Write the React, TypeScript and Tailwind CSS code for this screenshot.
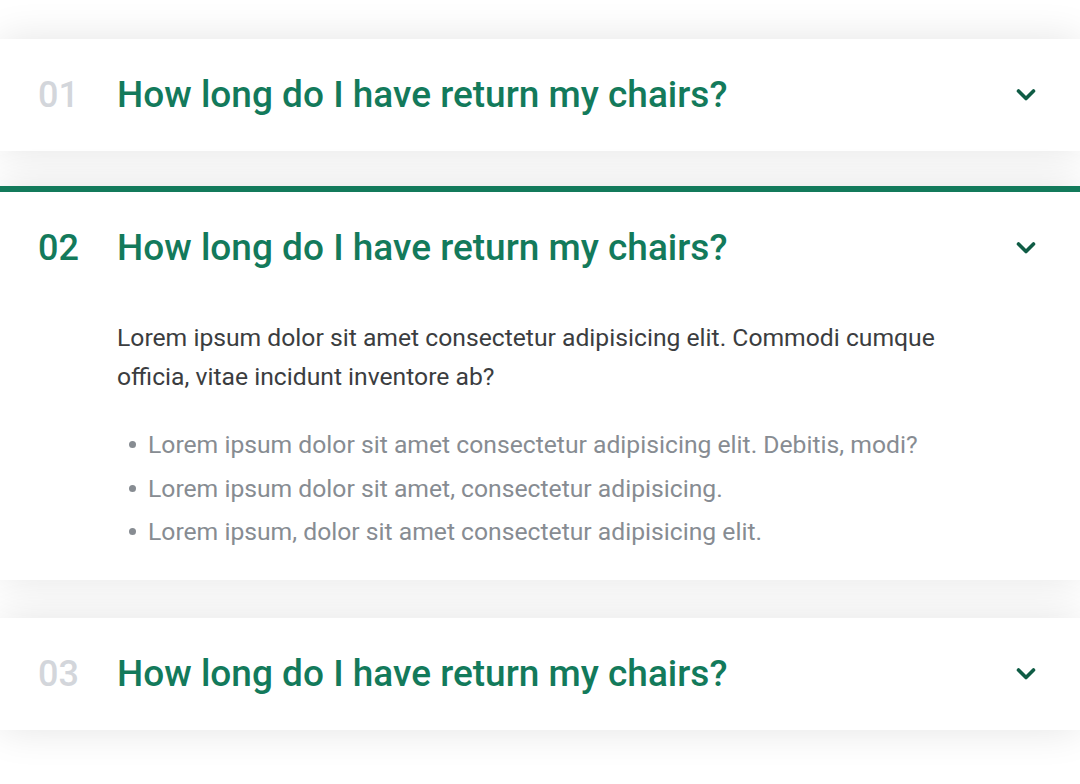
const faqs = [
  { num: '01', open: false },
  { num: '02', open: true },
  { num: '03', open: false },
];

const bullets = [
  'Lorem ipsum dolor sit amet consectetur adipisicing elit. Debitis, modi?',
  'Lorem ipsum dolor sit amet, consectetur adipisicing.',
  'Lorem ipsum, dolor sit amet consectetur adipisicing elit.',
];

function Chevron() {
  return (
    <svg width="20" height="14" viewBox="0 0 20 14" fill="none" className="shrink-0">
      <polyline
        points="2.5,3 10,10.5 17.5,3"
        stroke="#0f5c45"
        strokeWidth="3.6"
        strokeLinecap="round"
        strokeLinejoin="round"
      />
    </svg>
  );
}

function FaqItem({ num, open, last }: { num: string; open: boolean; last?: boolean }) {
  return (
    <div
      className={`bg-white shadow-[0_0_40px_rgba(0,0,0,0.11)] ${
        open ? 'border-t-[6px] border-[#137a5b] pb-[26px]' : ''
      } ${last ? 'mt-[3px]' : ''}`}
    >
      <div className="flex items-center pl-[38px] pr-[44px] py-[34px]">
        <span
          className={`w-[79px] shrink-0 text-[36px] leading-[44px] font-medium ${
            open ? 'text-[#137a5b]' : 'text-[#d3d6db]'
          }`}
        >
          {num}
        </span>
        <h3 className="flex-1 text-[37px] leading-[44px] font-medium text-[#137a5b]">
          How long do I have return my chairs?
        </h3>
        <Chevron />
      </div>
      {open && (
        <div className="pl-[117px] pr-[120px] mt-[14px]">
          <p className="text-[24.7px] leading-[39px] text-[#3b3d40]">
            Lorem ipsum dolor sit amet consectetur adipisicing elit. Commodi cumque officia, vitae incidunt
            inventore ab?
          </p>
          <ul className="mt-[27px]">
            {bullets.map((b) => (
              <li key={b} className="flex items-center text-[24.7px] leading-[43.5px] text-[#878c92]">
                <span className="w-[7px] h-[7px] rounded-full bg-[#878c92] ml-[12px] mr-[12px] shrink-0" />
                {b}
              </li>
            ))}
          </ul>
        </div>
      )}
    </div>
  );
}

export default function App() {
  return (
    <div className="min-h-[784px] bg-white pt-[39px] pb-[55px] flex flex-col gap-[35px] font-['Roboto',sans-serif]">
      {faqs.map((f, i) => (
        <FaqItem key={f.num} num={f.num} open={f.open} last={i === faqs.length - 1} />
      ))}
    </div>
  );
}
